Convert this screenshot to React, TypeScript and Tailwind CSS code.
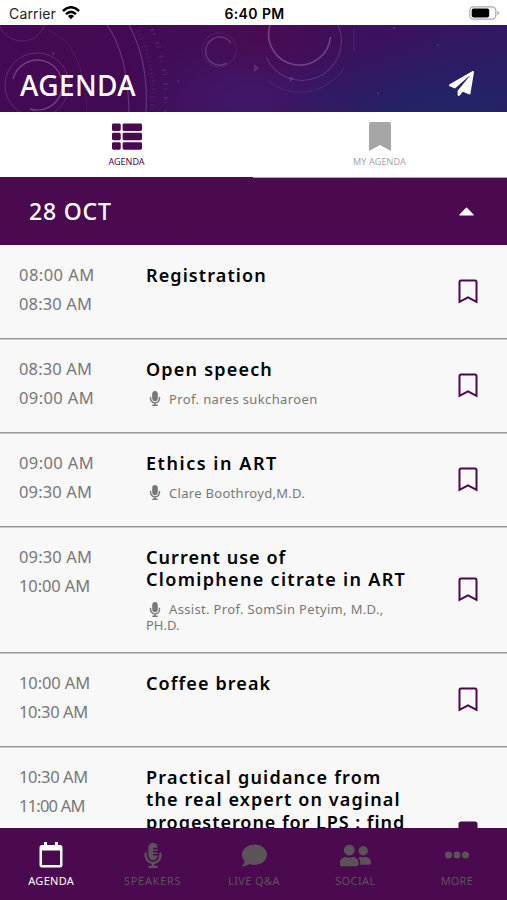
import React from "react";
import { FaPaperPlane, FaThList, FaMicrophone, FaMicrophoneAlt, FaComment, FaUserFriends } from "react-icons/fa";

type Piece = { text: string; tracking: string };

type Session = {
  start: Piece;
  end: Piece;
  lines: Piece[];
  speaker?: Piece[];
  height: string;
  saved?: boolean;
};

const t0800 = { text: "08:00 AM", tracking: "tracking-[0.45px]" };
const t0830 = { text: "08:30 AM", tracking: "tracking-[0.15px]" };
const t0900 = { text: "09:00 AM", tracking: "tracking-[0.4px]" };
const t0930 = { text: "09:30 AM", tracking: "tracking-[0.15px]" };
const t1000 = { text: "10:00 AM", tracking: "tracking-[-0.1px]" };
const t1030 = { text: "10:30 AM", tracking: "tracking-[-0.4px]" };
const t1100 = { text: "11:00 AM", tracking: "tracking-[-0.8px]" };

const sessions: Session[] = [
  { start: t0800, end: t0830, lines: [{ text: "Registration", tracking: "tracking-[1.1px]" }], height: "h-[94px]" },
  {
    start: t0830, end: t0900, height: "h-[94px]",
    lines: [{ text: "Open speech", tracking: "tracking-[1.2px]" }],
    speaker: [{ text: "Prof. nares sukcharoen", tracking: "tracking-[0.37px]" }],
  },
  {
    start: t0900, end: t0930, height: "h-[94px]",
    lines: [{ text: "Ethics in ART", tracking: "tracking-[1.55px]" }],
    speaker: [{ text: "Clare Boothroyd,M.D.", tracking: "tracking-[0.3px]" }],
  },
  {
    start: t0930, end: t1000, height: "h-[126px]",
    lines: [
      { text: "Current use of", tracking: "tracking-[1.05px]" },
      { text: "Clomiphene citrate in ART", tracking: "tracking-[1.32px]" },
    ],
    speaker: [
      { text: "Assist. Prof. SomSin Petyim, M.D.,", tracking: "tracking-[0.34px]" },
      { text: "PH.D.", tracking: "tracking-[0px]" },
    ],
  },
  { start: t1000, end: t1030, lines: [{ text: "Coffee break", tracking: "tracking-[1.1px]" }], height: "h-[94px]" },
  {
    start: t1030, end: t1100, height: "h-[174px]", saved: true,
    lines: [
      { text: "Practical guidance from", tracking: "tracking-[1.21px]" },
      { text: "the real expert on vaginal", tracking: "tracking-[1.13px]" },
      { text: "progesterone for LPS : find", tracking: "tracking-[0.95px]" },
    ],
  },
];

function BookmarkMark({ saved }: { saved?: boolean }) {
  return (
    <svg viewBox="0 0 20 25" className="h-[25px] w-5" fill={saved ? "#4b0950" : "none"} stroke="#4b0950" strokeWidth="2">
      <path d="M1.5 22.8V3Q1.5 1.5 3 1.5H17Q18.5 1.5 18.5 3V22.8L10 18.4Z" />
    </svg>
  );
}

function StatusBar() {
  return (
    <div className="flex h-[25px] shrink-0 items-center bg-white pt-[2px] pr-[7px] pl-[9px] font-['Inter',sans-serif] text-black">
      <div className="flex flex-1 items-center gap-[6px] text-[14px] tracking-[0.15px] text-[#222]">
        <span>Carrier</span>
        <svg viewBox="0 0 18 14" className="mb-[1px] h-[14px] w-[18px]" fill="none" stroke="#000" strokeWidth="2.5">
          <path d="M.9 5Q9-2.5 17.1 5M4 8.2Q9 3.6 14 8.2" />
          <path d="M5.9 10Q9 7.3 12.1 10L9 13.3Z" fill="#000" stroke="none" />
        </svg>
      </div>
      <span className="text-[14px] font-semibold tracking-[0.4px]">6:40 PM</span>
      <div className="flex flex-1 justify-end pb-[1px]">
        <svg viewBox="0 0 31 14" className="h-[14px] w-[31px]">
          <rect x=".8" y=".8" width="26" height="12.4" rx="3.6" fill="#fff" stroke="#aaa" strokeWidth="1.2" />
          <rect x="2.7" y="2.6" width="17.5" height="8.8" rx="1.8" />
          <path d="M28.3 4.8Q32 7 28.3 9.4Z" fill="#aaa" />
        </svg>
      </div>
    </div>
  );
}

function Header() {
  return (
    <header className="relative flex h-[87px] shrink-0 items-end justify-between overflow-hidden bg-[#3b0d58] pr-[33px] pb-[13px] pl-5">
      <svg viewBox="0 0 507 87" className="absolute inset-0 h-full w-full" fill="none">
        <defs>
          <linearGradient id="sky" x1="0" y1="0" x2="1" y2="0">
            <stop offset="0" stopColor="#430a55" />
            <stop offset=".25" stopColor="#410a54" />
            <stop offset=".45" stopColor="#40105a" />
            <stop offset=".75" stopColor="#3b115d" />
            <stop offset="1" stopColor="#301a63" />
          </linearGradient>
          <radialGradient id="navy">
            <stop offset="0" stopColor="#20256a" />
            <stop offset=".4" stopColor="#20256a" stopOpacity=".75" />
            <stop offset="1" stopColor="#20256a" stopOpacity="0" />
          </radialGradient>
          <radialGradient id="rose">
            <stop offset="0" stopColor="#4d0950" stopOpacity=".8" />
            <stop offset="1" stopColor="#4d0950" stopOpacity="0" />
          </radialGradient>
          <radialGradient id="violet">
            <stop offset="0" stopColor="#42196f" stopOpacity=".75" />
            <stop offset="1" stopColor="#42196f" stopOpacity="0" />
          </radialGradient>
        </defs>
        <rect width="507" height="87" fill="url(#sky)" />
        <ellipse cx="245" cy="75" rx="120" ry="60" fill="url(#violet)" />
        <ellipse cx="450" cy="100" rx="190" ry="90" fill="url(#navy)" />
        <ellipse cx="265" cy="8" rx="90" ry="48" fill="url(#rose)" />
        <ellipse cx="60" cy="20" rx="140" ry="60" fill="url(#rose)" opacity=".5" />
        <g stroke="#b68ac8">
          <circle cx="37" cy="60" r="32" opacity=".25" />
          <path d="M13 54A25 25 0 1 1 30 84" opacity=".42" strokeWidth="1.4" />
          <circle cx="22" cy="-8" r="24" opacity=".2" />
          <path d="M107 0Q128 30 129 87" opacity=".32" strokeWidth="1.2" />
          <path d="M129 0Q149 37 146 87" opacity=".32" strokeWidth="1.2" />
          <path d="M138 6Q157 42 152 87" opacity=".12" strokeWidth="5" strokeDasharray="1 3" />
          <path d="M152 4Q169 42 165 87" opacity=".15" strokeWidth="4" strokeDasharray="2 3 1 8" />
          <path d="M48 5Q84 18 87 87" opacity=".1" />
          <path d="M227 38A14 14 0 1 1 231 18" opacity=".3" strokeWidth="1.5" />
          <circle cx="219" cy="25" r="17" opacity=".12" />
          <path d="M270 0A31 31 0 1 0 330.500 12" opacity=".42" strokeWidth="1.6" />
          <path d="M266 32A39 39 0 0 0 338 0" opacity=".25" strokeWidth="1.2" />
          <path d="M268 56A52 52 0 0 0 344 43M354 4V26" opacity=".15" />
        </g>
        <g fill="#a58bbb" opacity=".25">
          <path d="M254 39L259 43L254 47ZM289 52L294 53L290 57ZM52 27L55 28L53 31Z" />
          <circle cx="394" cy="3" r="1" /><circle cx="438" cy="20" r="1" />
          <circle cx="178" cy="56" r="1" /><circle cx="378" cy="68" r="1" />
        </g>
      </svg>
      <h1 className="relative text-[28px] leading-[28px] font-medium tracking-[0.4px] text-white">AGENDA</h1>
      <FaPaperPlane className="relative mb-[3px] h-[25px] w-[25px] text-white" />
    </header>
  );
}

function Tabs() {
  return (
    <nav className="flex h-[66px] shrink-0 bg-white text-[9px] leading-[10px]">
      <div className="flex flex-1 flex-col items-center border-b border-[#4b0950] pt-[9px] text-[#4b0950]">
        <FaThList className="h-[31px] w-[30px]" />
        <span className="mt-[5px] tracking-[0px]">AGENDA</span>
      </div>
      <div className="flex flex-1 flex-col items-center border-b border-[#aaa] pt-[9px] pr-px text-[#a6a6a6]">
        <svg viewBox="0 0 22 31" className="h-[31px] w-[22px]" fill="#a6a6a6">
          <path d="M0 30V3Q0 1 2 1H20Q22 1 22 3V30L11 24Z" />
        </svg>
        <span className="mt-[5px] tracking-[0.15px]">MY AGENDA</span>
      </div>
    </nav>
  );
}

function SessionRow({ s }: { s: Session }) {
  return (
    <li className={`${s.height} flex shrink-0 border-t border-b border-t-[#c9c9c9] border-b-[#989898] bg-[#f8f8f8] pl-[19px] first:border-t-[#f8f8f8]`}>
      <div className="w-[127px] shrink-0 pt-[14px] text-[16.5px] leading-[29px] whitespace-nowrap text-[#777]">
        <div className={s.start.tracking}>{s.start.text}</div>
        <div className={s.end.tracking}>{s.end.text}</div>
      </div>
      <div className="w-[282px] shrink-0 pt-[18px] whitespace-nowrap">
        <h2 className="text-[18px] leading-[22.3px] font-semibold text-black">
          {s.lines.map((l) => (
            <span key={l.text} className={`block w-max ${l.tracking}`}>{l.text}</span>
          ))}
        </h2>
        {s.speaker && (
          <p className="mt-[10.5px] text-[13px] leading-4 text-[#777]">
            <span className="flex items-center">
              <FaMicrophone className="mr-[7px] ml-[2px] h-[15px] w-[14px]" />
              <span className={s.speaker[0].tracking}>{s.speaker[0].text}</span>
            </span>
            {s.speaker[1] && <span className={`block ${s.speaker[1].tracking}`}>{s.speaker[1].text}</span>}
          </p>
        )}
      </div>
      <div className="flex flex-1 items-center justify-center pb-[2px]">
        <BookmarkMark saved={s.saved} />
      </div>
    </li>
  );
}

const navItems = [
  {
    label: "AGENDA", tracking: "tracking-[0.3px]",
    icon: (
      <svg viewBox="0 0 24 26" className="h-[26px] w-6" fill="#fff">
        <path fillRule="evenodd" d="M5 0H8V3H16V0H19V3H21Q23.500 3 23.500 5.500V23Q23.500 25.500 21 25.500H3Q.5 25.500 .5 23V5.500Q.5 3 3 3H5ZM3 8.500V23H21V8.500Z" />
      </svg>
    ),
  },
  { label: "SPEAKERS", tracking: "tracking-[0.7px]", icon: <FaMicrophoneAlt className="h-[25px] w-[18px]" /> },
  { label: "LIVE Q&A", tracking: "tracking-[0.4px]", icon: <FaComment className="h-[25px] w-[25px]" /> },
  { label: "SOCIAL", tracking: "tracking-[0.4px]", icon: <FaUserFriends className="h-[31px] w-[31px]" /> },
  {
    label: "MORE", tracking: "tracking-[0.2px]",
    icon: (
      <svg viewBox="0 0 24 8" className="h-2 w-6" fill="currentColor">
        <circle cx="3.500" cy="4" r="3.500" /><circle cx="12" cy="4" r="3.500" /><circle cx="20.500" cy="4" r="3.500" />
      </svg>
    ),
  },
];

export default function App() {
  return (
    <div className="flex h-[900px] w-[507px] flex-col overflow-hidden bg-white font-['Noto_Sans',sans-serif]">
      <StatusBar />
      <Header />
      <Tabs />
      <div className="flex h-[67px] shrink-0 items-center justify-between bg-[#4b0950] pr-[33px] pl-[29px] text-white">
        <span className="mb-[2px] text-[23px] leading-[30px] font-medium tracking-[0.8px]">28 OCT</span>
        <svg viewBox="0 0 15 9" className="h-[9px] w-[15px]" fill="#fff">
          <path d="M.5 8.500Q0 8 .5 7.500L7 .8Q7.500.3 8 .8L14.500 7.500Q15 8 14.500 8.500Z" />
        </svg>
      </div>
      <ul className="flex min-h-0 flex-1 flex-col overflow-hidden">
        {sessions.map((s) => (
          <SessionRow key={s.start.text} s={s} />
        ))}
      </ul>
      <footer className="flex h-[72px] shrink-0 bg-[#4b0950] text-[11px] leading-[14px]">
        {navItems.map((n) => (
          <div key={n.label} className={`flex flex-1 flex-col items-center pt-[12px] pl-px ${n.label === "AGENDA" ? "text-white" : "text-[#5c5359]"}`}>
            <div className="flex h-[30px] items-center justify-center">{n.icon}</div>
            <span className={`mt-[4px] ${n.tracking}`}>{n.label}</span>
          </div>
        ))}
      </footer>
    </div>
  );
}
